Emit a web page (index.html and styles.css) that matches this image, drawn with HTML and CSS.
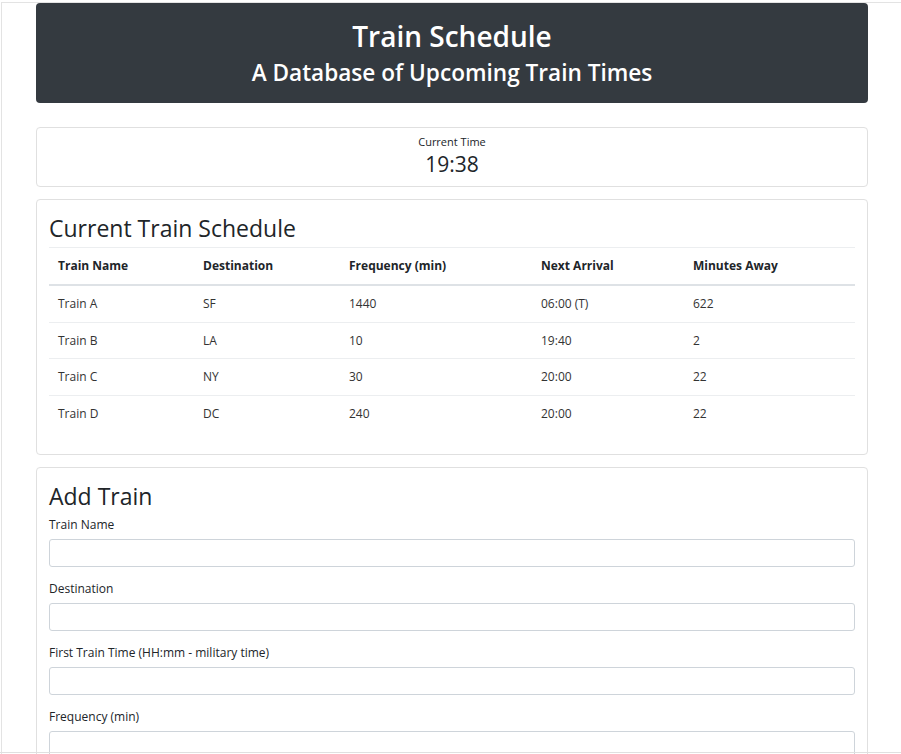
FILE: index.html
```
<!DOCTYPE html>
<html lang="en">
<head>
<meta charset="utf-8">
<title>Train Schedule</title>
<link rel="stylesheet" href="styles.css">
</head>
<body>
<div class="frame">
  <div class="container">
    <header class="jumbotron">
      <h1 class="title">Train Schedule</h1>
      <h2 class="subtitle">A Database of Upcoming Train Times</h2>
    </header>

    <section class="card clock-card">
      <div class="clock-label">Current Time</div>
      <div class="clock-time">19:38</div>
    </section>

    <section class="card">
      <h2 class="card-title">Current Train Schedule</h2>
      <table class="table">
        <colgroup>
          <col class="c1"><col class="c2"><col class="c3"><col class="c4"><col class="c5">
        </colgroup>
        <thead>
          <tr><th>Train Name</th><th>Destination</th><th>Frequency (min)</th><th>Next Arrival</th><th>Minutes Away</th></tr>
        </thead>
        <tbody>
          <tr><td>Train A</td><td>SF</td><td>1440</td><td>06:00 (T)</td><td>622</td></tr>
          <tr><td>Train B</td><td>LA</td><td>10</td><td>19:40</td><td>2</td></tr>
          <tr><td>Train C</td><td>NY</td><td>30</td><td>20:00</td><td>22</td></tr>
          <tr><td>Train D</td><td>DC</td><td>240</td><td>20:00</td><td>22</td></tr>
        </tbody>
      </table>
    </section>

    <section class="card">
      <h2 class="card-title">Add Train</h2>
      <form class="form">
        <div class="form-group">
          <label class="label" for="name">Train Name</label>
          <input class="input" id="name" type="text">
        </div>
        <div class="form-group">
          <label class="label" for="dest">Destination</label>
          <input class="input" id="dest" type="text">
        </div>
        <div class="form-group">
          <label class="label" for="first">First Train Time (HH:mm - military time)</label>
          <input class="input" id="first" type="text">
        </div>
        <div class="form-group">
          <label class="label" for="freq">Frequency (min)</label>
          <input class="input" id="freq" type="text">
        </div>
      </form>
    </section>
  </div>
</div>
<div class="window-edge"></div>
</body>
</html>
```
FILE: styles.css
```
html, body {
  margin: 0;
  padding: 0;
  background: #fff;
}
body {
  font-family: "Open Sans", "Noto Sans", sans-serif;
  font-size: 12px;
  line-height: 18px;
  color: #212529;
  padding-top: 2px;
  overflow: hidden;
  height: 754px;
  box-sizing: border-box;
}
.frame {
  border-top: 1px solid #e3e3e3;
  border-left: 1px solid #e3e3e3;
  margin-left: 1px;
  height: 751px;
  overflow: hidden;
}
.container {
  width: 832px;
  margin-left: 34px;
}
.jumbotron {
  background: #343a40;
  color: #fff;
  border-radius: 4px;
  padding: 15px 12px 16px;
  text-align: center;
  margin-bottom: 24px;
}
.title {
  margin: 0 0 5px;
  font-size: 28px;
  line-height: 36px;
  font-weight: 600;
}
.subtitle {
  margin: 0;
  font-size: 22.6px;
  line-height: 28px;
  font-weight: 600;
}
.card {
  border: 1px solid #e0e0e0;
  border-radius: 4px;
  padding: 12px 12px 12px;
  margin-bottom: 12px;
}
.clock-card {
  padding: 4px 12px 9px;
  text-align: center;
}
.clock-label {
  font-size: 11px;
  line-height: 20px;
}
.clock-time {
  font-size: 21px;
  line-height: 25px;
  font-weight: 500;
}
.card-title {
  margin: 0 0 2px;
  font-size: 23px;
  line-height: 33px;
  font-weight: 500;
}
.table {
  width: 100%;
  border-collapse: collapse;
  margin-bottom: 11px;
  table-layout: fixed;
}
.c1 { width: 145px; }
.c2 { width: 146px; }
.c3 { width: 192px; }
.c4 { width: 152px; }
.c5 { width: 171px; }
.table th, .table td {
  text-align: left;
  padding: 9px 9px;
  border-top: 1px solid #eceef0;
  line-height: 18px;
  vertical-align: top;
}
.table th {
  font-weight: 700;
  border-bottom: 2px solid #dee2e6;
  color: #212529;
}
.table td {
  color: #333;
  padding: 9px 9px 8.6px;
}
.form-group {
  margin-bottom: 12px;
}
.label {
  display: block;
  margin-bottom: 5px;
  padding-top: 1px;
  line-height: 18px;
}
.input {
  display: block;
  box-sizing: border-box;
  width: 100%;
  height: 28px;
  border: 1px solid #ced4da;
  border-radius: 3px;
  padding: 4px 9px;
  font: inherit;
  background: #fff;
}
.window-edge {
  position: fixed;
  left: 0;
  right: 0;
  bottom: 1px;
  height: 1px;
  background: #e0e0e0;
}
```
